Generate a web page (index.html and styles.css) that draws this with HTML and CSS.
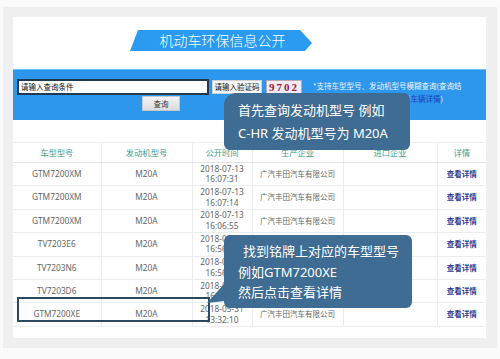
FILE: index.html
```html
<!DOCTYPE html>
<html lang="zh-CN">
<head>
<meta charset="utf-8">
<title>机动车环保信息公开</title>
<link rel="stylesheet" href="styles.css">
</head>
<body>
<div class="frame">
  <div class="panel">
    <div class="title-area">
      <div class="ribbon"><span>机动车环保信息公开</span></div>
    </div>
    <div class="search">
      <div class="search-main">
        <div class="query-input">请输入查询条件</div>
        <div class="query-btn">查询</div>
      </div>
      <div class="captcha-input">请输入验证码</div>
      <div class="captcha-img">9702</div>
      <div class="note">*支持车型型号、发动机型号模糊查询(查询结<br>果，点击车型型号即可以查看<span class="note-link">车辆详情</span>)</div>
    </div>
    <table class="results">
      <colgroup>
        <col class="c1"><col class="c2"><col class="c3"><col class="c4"><col class="c5"><col class="c6">
      </colgroup>
      <thead>
        <tr><th>车型型号</th><th>发动机型号</th><th>公开时间</th><th>生产企业</th><th>进口企业</th><th>详情</th></tr>
      </thead>
      <tbody>
        <tr><td>GTM7200XM</td><td>M20A</td><td>2018-07-13<br>16:07:31</td><td class="maker">广汽丰田汽车有限公司</td><td></td><td class="detail">查看详情</td></tr>
        <tr><td>GTM7200XM</td><td>M20A</td><td>2018-07-13<br>16:07:14</td><td class="maker">广汽丰田汽车有限公司</td><td></td><td class="detail">查看详情</td></tr>
        <tr><td>GTM7200XM</td><td>M20A</td><td>2018-07-13<br>16:06:55</td><td class="maker">广汽丰田汽车有限公司</td><td></td><td class="detail">查看详情</td></tr>
        <tr><td>TV7203E6</td><td>M20A</td><td>2018-06-15<br>16:56:42</td><td class="maker">广汽丰田汽车有限公司</td><td></td><td class="detail">查看详情</td></tr>
        <tr><td>TV7203N6</td><td>M20A</td><td>2018-06-15<br>16:56:20</td><td class="maker">广汽丰田汽车有限公司</td><td></td><td class="detail">查看详情</td></tr>
        <tr><td>TV7203D6</td><td>M20A</td><td>2018-06-15<br>16:55:58</td><td class="maker">广汽丰田汽车有限公司</td><td></td><td class="detail">查看详情</td></tr>
        <tr><td>GTM7200XE</td><td>M20A</td><td>2018-05-31<br>13:32:10</td><td class="maker">广汽丰田汽车有限公司</td><td></td><td class="detail">查看详情</td></tr>
      </tbody>
    </table>
    <div class="highlight"></div>
    <div class="tip tip-top">
      <div class="tip-line">首先查询发动机型号 例如</div>
      <div class="tip-line">C-HR 发动机型号为 M20A</div>
    </div>
    <div class="tip tip-bottom">
      <div class="tip-line indent">找到铭牌上对应的车型型号</div>
      <div class="tip-line">例如GTM7200XE</div>
      <div class="tip-line">然后点击查看详情</div>
    </div>
  </div>
</div>
</body>
</html>
```
FILE: styles.css
```css
html, body {
  margin: 0;
  padding: 0;
}
body {
  background: #fafafa;
  font-family: "Noto Sans", "Noto Sans CJK SC", sans-serif;
  width: 500px;
  height: 359px;
  overflow: hidden;
}
.frame {
  margin: 7px 3px 0 3px;
  padding: 10px 11px 10px 10px;
  background: #efefef;
}
.panel {
  position: relative;
  height: 321px;
  background: #ffffff;
}
.title-area {
  height: 52px;
  box-sizing: border-box;
  padding-top: 13px;
}
.ribbon {
  margin-left: 117px;
  width: 182px;
  height: 21px;
  background: #2a9bf0;
  clip-path: polygon(8px 0, 170px 0, 182px 13px, 175px 21px, 0 21px);
  display: flex;
  align-items: center;
  justify-content: center;
}
.ribbon span {
  color: #ffffff;
  font-family: "Noto Sans CJK SC", sans-serif;
  font-weight: 300;
  font-size: 14px;
  line-height: 21px;
  padding-left: 3px;
}
.search {
  height: 51px;
  box-sizing: border-box;
  background: #2d97ed;
  border-top: 1px solid #6cc0f7;
  padding: 9px 4px 0 4px;
  display: flex;
  align-items: flex-start;
}
.search-main {
  width: 192px;
  display: flex;
  flex-direction: column;
}
.query-input {
  height: 16px;
  box-sizing: border-box;
  border: 2px solid #1f3a55;
  background: #ffffff;
  color: #111;
  font-family: "Noto Sans CJK SC", sans-serif;
  font-size: 7.5px;
  line-height: 12px;
  padding-left: 2px;
}
.query-btn {
  margin: 1px 0 0 125px;
  width: 38px;
  height: 15px;
  box-sizing: border-box;
  background: linear-gradient(#f4f4f4, #dcdcdc);
  border: 1px solid #c8c8c8;
  color: #333;
  font-family: "Noto Sans CJK SC", sans-serif;
  font-size: 7.5px;
  line-height: 13px;
  text-align: center;
}
.captcha-input {
  margin: 1px 0 0 3px;
  width: 50px;
  height: 14px;
  box-sizing: border-box;
  background: #f6f6f6;
  border: 1px solid #d0d0d0;
  color: #111;
  font-family: "Noto Sans CJK SC", sans-serif;
  font-size: 7.5px;
  line-height: 12px;
  text-align: center;
}
.captcha-img {
  margin: 1px 0 0 4px;
  width: 36px;
  height: 14px;
  box-sizing: border-box;
  background: #f3e9f1;
  border: 1px solid #b9a9b6;
  color: #8d2344;
  font-family: "Liberation Serif", serif;
  font-weight: bold;
  font-size: 11px;
  line-height: 12px;
  letter-spacing: 2px;
  text-align: center;
}
.note {
  margin-left: 11px;
  color: #eaf5ff;
  font-family: "Noto Sans CJK SC", sans-serif;
  font-size: 7.5px;
  line-height: 13px;
  white-space: nowrap;
}
.note-link {
  color: #1b3db8;
}
.results {
  width: 473px;
  margin-top: 22px;
  border-collapse: collapse;
  table-layout: fixed;
  font-size: 8.3px;
  color: #666666;
}
.c1 { width: 88px; }
.c2 { width: 91px; }
.c3 { width: 60px; }
.c4 { width: 91px; }
.c5 { width: 94px; }
.c6 { width: 49px; }
.results thead tr {
  height: 20px;
}
.results tbody tr {
  height: 23.4px;
}
.results th {
  padding: 0;
  font-weight: normal;
  color: #3e9d8e;
  font-family: "Noto Sans CJK SC", sans-serif;
  line-height: 11px;
  border: 1px solid #ececec;
  border-bottom-color: #e4e4e4;
}
.results td {
  padding: 0;
  text-align: center;
  line-height: 10.5px;
  border: 1px solid #ececec;
}
.results th:first-child, .results td:first-child { border-left: none; }
.results th:last-child, .results td:last-child { border-right: none; }
.results .maker {
  font-family: "Noto Sans CJK SC", sans-serif;
  font-size: 7.5px;
}
.results .detail {
  font-family: "Noto Sans CJK SC", sans-serif;
  font-size: 7.5px;
  font-weight: bold;
  color: #2c3b8f;
}
.highlight {
  position: absolute;
  left: 4px;
  top: 280px;
  width: 193px;
  height: 25px;
  box-sizing: border-box;
  border: 2px solid #2c4a5e;
}
.tip {
  position: absolute;
  box-sizing: border-box;
  background: #3f6c92;
  color: #ffffff;
  font-family: "Noto Sans", "Noto Sans CJK SC", sans-serif;
  font-size: 13px;
  border-radius: 6px;
  white-space: nowrap;
}
.tip-top {
  left: 211px;
  top: 76px;
  width: 186px;
  height: 57px;
  padding: 6px 0 0 14px;
  line-height: 23px;
  border-top-left-radius: 12px;
}
.tip-bottom {
  left: 211px;
  top: 218px;
  width: 188px;
  height: 73px;
  padding: 6px 0 0 14px;
  line-height: 20.5px;
}
.tip-bottom::after {
  content: "";
  position: absolute;
  left: -17px;
  top: 48px;
  width: 18px;
  height: 20px;
  background: #3f6c92;
  clip-path: polygon(100% 0, 100% 90%, 0 100%);
}
.indent {
  padding-left: 5px;
}
```
